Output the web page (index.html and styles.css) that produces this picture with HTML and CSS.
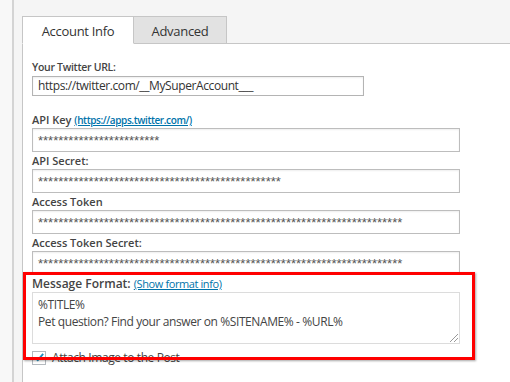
FILE: index.html
```html
<!DOCTYPE html>
<html lang="en">
<head>
  <meta charset="utf-8">
  <title>Twitter settings</title>
  <link rel="stylesheet" href="styles.css">
</head>
<body>
  <div class="page">
    <div class="side"></div>
    <div class="main">
      <div class="tabs">
        <div class="tab active">Account Info</div>
        <div class="tab">Advanced</div>
      </div>
      <div class="panel">
        <label class="lbl small">Your Twitter URL:</label>
        <div class="field short">https://twitter.com/__MySuperAccount___</div>

        <label class="lbl gap">API Key <a href="#" class="link">(https://apps.twitter.com/)</a></label>
        <div class="field stars">************************</div>

        <label class="lbl">API Secret:</label>
        <div class="field stars">************************************************</div>

        <label class="lbl">Access Token</label>
        <div class="field stars">************************************************************************</div>

        <label class="lbl">Access Token Secret:</label>
        <div class="field stars">************************************************************************</div>

        <div class="highlight">
          <label class="lbl big">Message Format: <a href="#" class="link plain">(Show format info)</a></label>
          <div class="area">%TITLE%<br>Pet question? Find your answer on %SITENAME% - %URL%<span class="grip"></span></div>
          <div class="check-row">
            <span class="check">
              <svg width="13" height="13" viewBox="0 0 13 13"><path d="M2.5 6.8 L5.2 9.4 L11 2.6" fill="none" stroke="#1e8cbe" stroke-width="2"/></svg>
            </span>
            <span>Attach Image to the Post</span>
          </div>
        </div>
      </div>
    </div>
  </div>
</body>
</html>
```

FILE: styles.css
```css
body { margin: 0; background: #f5f5f5; font-family: "Open Sans", "Noto Sans", sans-serif; color: #3c3c3c; }
.page { display: flex; height: 382px; overflow: hidden; }
.side { width: 12px; border-right: 2px solid #d4d4d4; background: #f8f8f8; }
.main { flex: 1; padding: 16px 0 0 8px; display: flex; flex-direction: column; }
.tabs { display: flex; position: relative; z-index: 1; margin-bottom: -1px; }
.tab { box-sizing: border-box; height: 28px; line-height: 28px; font-size: 13px; letter-spacing: -0.3px; text-align: center; white-space: nowrap; border: 1px solid #c6c6c6; background: #e2e2e2; color: #333; }
.tab.active { width: 112px; background: #fff; border-bottom-color: #fff; }
.tab + .tab { width: 93px; border-left: 0; }
.panel { flex: 1; background: #fff; border-left: 1px solid #c6c6c6; border-top: 1px solid #c6c6c6; padding: 15px 0 0 9px; display: flex; flex-direction: column; align-items: flex-start; }
.lbl { display: block; height: 17px; line-height: 17px; font-size: 11px; font-weight: 600; color: #444; }
.lbl.small { font-size: 10.5px; letter-spacing: -0.3px; }
.lbl.big { font-size: 12px; }
.lbl.gap { margin-top: 15px; }
.link { color: #0073aa; font-size: 10px; font-weight: 600; letter-spacing: -0.4px; text-decoration: underline; }
.link.plain { font-weight: 400; font-size: 11px; }
.field { box-sizing: border-box; width: 428px; height: 24px; line-height: 22px; border: 1px solid #bdbdbd; box-shadow: inset 0 1px 2px rgba(0,0,0,0.07); padding: 0 5px; font-size: 12px; letter-spacing: -0.4px; color: #333; white-space: nowrap; overflow: hidden; }
.field.short { width: 332px; height: 20px; line-height: 18px; border-color: #b4b4b4; }
.field.stars { font-family: "Liberation Sans", sans-serif; font-size: 13px; letter-spacing: 0; line-height: 24px; color: #555; }
.highlight { position: relative; }
.highlight::after { content: ""; position: absolute; left: -9px; top: -3px; width: 446px; height: 82px; border: 3px solid #f00; box-shadow: 1px 1px 2px rgba(0,0,0,0.35); pointer-events: none; }
.area { position: relative; box-sizing: border-box; width: 428px; height: 52px; border: 1px solid #dcdcdc; padding: 3px 5px; font-size: 12px; letter-spacing: -0.4px; line-height: 17px; color: #444; }
.grip { position: absolute; right: 1px; bottom: 1px; width: 8px; height: 8px; background: linear-gradient(135deg, transparent 45%, #999 45%, #999 52%, transparent 52%, transparent 70%, #999 70%, #999 77%, transparent 77%); }
.check-row { display: flex; align-items: center; gap: 6px; margin-top: 5px; font-size: 12px; letter-spacing: -0.4px; color: #444; }
.check { box-sizing: border-box; width: 14px; height: 14px; border: 1px solid #b4b9be; background: #fff; display: flex; align-items: center; justify-content: center; }
```
